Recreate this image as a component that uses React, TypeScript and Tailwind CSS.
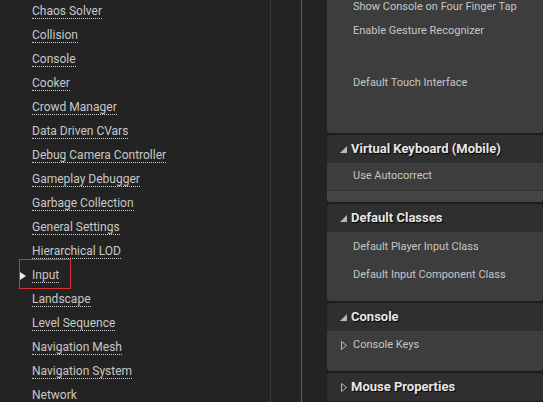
import React from "react";

const leftItems = [
  "Chaos Solver",
  "Collision",
  "Console",
  "Cooker",
  "Crowd Manager",
  "Data Driven CVars",
  "Debug Camera Controller",
  "Gameplay Debugger",
  "Garbage Collection",
  "General Settings",
  "Hierarchical LOD",
  "Input",
  "Landscape",
  "Level Sequence",
  "Navigation Mesh",
  "Navigation System",
  "Network",
];

function ExpandedArrow() {
  return (
    <svg width="7" height="7" viewBox="0 0 7 7" className="shrink-0">
      <polygon points="7,0 7,7 0,7" fill="#b8b8b8" />
    </svg>
  );
}

function CollapsedArrow() {
  return (
    <svg width="6" height="9" viewBox="0 0 6 9" className="shrink-0">
      <polygon points="0.5,0.5 5.5,4.5 0.5,8.5" fill="none" stroke="#b8b8b8" strokeWidth="1" />
    </svg>
  );
}

function Header({ title, expanded }: { title: string; expanded: boolean }) {
  return (
    <div className="h-[28px] bg-[#2f2f2f] flex items-center pl-[13px] gap-[4px]">
      <div className="w-[7px] flex justify-center">{expanded ? <ExpandedArrow /> : <CollapsedArrow />}</div>
      <span className="text-[13px] font-bold text-[#e6e6e6] [text-shadow:1px_1px_1px_#000]">{title}</span>
    </div>
  );
}

function Row({ label, arrow, h = "h-[28px]" }: { label: string; arrow?: boolean; h?: string }) {
  return (
    <div className={`${h} flex items-center pl-[14px]`}>
      <div className="w-[12px] flex items-center">{arrow ? <CollapsedArrow /> : null}</div>
      <span className="text-[11px] text-[#c6c6c6]">{label}</span>
    </div>
  );
}

export default function App() {
  return (
    <div
      className="w-[543px] h-[402px] bg-[#232323] flex overflow-hidden"
      style={{ fontFamily: "Roboto, 'Liberation Sans', sans-serif" }}
    >
      {/* left list */}
      <div className="w-[270px] shrink-0 flex flex-col -mt-[1px]">
        {leftItems.map((name) => (
          <div key={name} className="h-[24px] shrink-0 flex items-center pl-[32px] relative">
            {name === "Input" && (
              <>
                <div className="absolute left-[19px] top-[-4px] w-[52px] h-[30px] border border-[#d8302c]" />
                <svg width="6" height="8" viewBox="0 0 6 8" className="absolute left-[20px] top-[9px]">
                  <polygon points="0,0 6,4 0,8" fill="#e8e8e8" />
                </svg>
              </>
            )}
            <span className="text-[12px] leading-[13px] text-[#c8c8c8] border-b border-dotted border-[#d0d0d0] pt-[1px]">
              {name}
            </span>
          </div>
        ))}
      </div>
      <div className="w-px shrink-0 bg-[#3a3a3a]" />
      <div className="w-[30px] shrink-0" />
      <div className="w-px shrink-0 bg-[#5e5e5e]" />
      <div className="w-[25px] shrink-0" />

      {/* details panel */}
      <div className="flex-1 flex flex-col gap-[2px] bg-[#1d1d1d] -mt-[5px]">
        <div className="bg-[#3d3d3d] rounded-b-[3px] shrink-0">
          <Row label="Show Console on Four Finger Tap" h="h-[24px]" />
          <Row label="Enable Gesture Recognizer" h="h-[24px]" />
          <div className="h-[28px]" />
          <Row label="Default Touch Interface" h="h-[24px]" />
          <div className="h-[38px]" />
        </div>
        <div className="rounded-[3px] overflow-hidden shrink-0">
          <Header title="Virtual Keyboard (Mobile)" expanded />
          <div className="bg-[#3d3d3d] border-b border-[#333]">
            <Row label="Use Autocorrect" h="h-[27px]" />
          </div>
          <div className="h-[11px] bg-[#454545]" />
        </div>
        <div className="rounded-[3px] overflow-hidden shrink-0">
          <Header title="Default Classes" expanded />
          <div className="bg-[#3d3d3d]">
            <div className="h-[1px]" />
            <Row label="Default Player Input Class" />
            <Row label="Default Input Component Class" />
            <div className="h-[12px]" />
          </div>
        </div>
        <div className="rounded-[3px] overflow-hidden shrink-0">
          <Header title="Console" expanded />
          <div className="bg-[#3d3d3d]">
            <Row label="Console Keys" arrow />
            <div className="h-[12px]" />
          </div>
        </div>
        <div className="rounded-[3px] overflow-hidden shrink-0">
          <Header title="Mouse Properties" expanded={false} />
        </div>
      </div>
    </div>
  );
}
